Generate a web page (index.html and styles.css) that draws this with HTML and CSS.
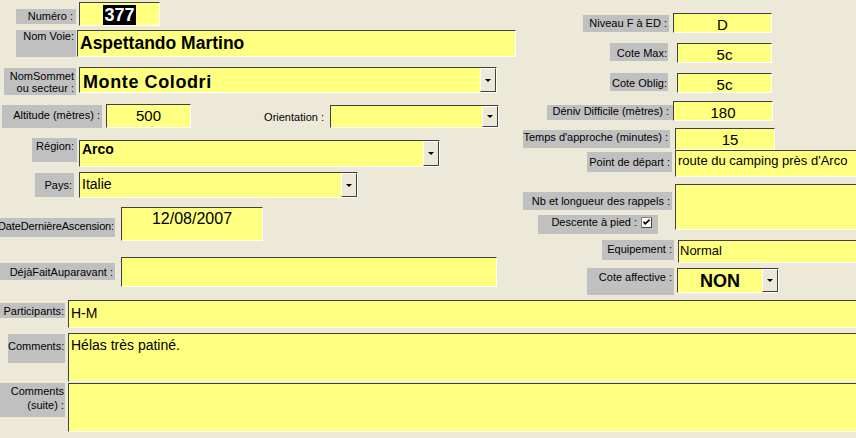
FILE: index.html
```html
<!DOCTYPE html>
<html lang="fr">
<head>
<meta charset="utf-8">
<title>Voie</title>
<link rel="stylesheet" href="styles.css">
</head>
<body>
<div class="form">
  <div class="top">
    <div class="col-left">
      <div class="row ra">
        <div class="lbl l-num">Numéro :</div>
        <div class="fld f-num"><div class="val v-num"><span class="sel">377</span></div></div>
      </div>
      <div class="row rb">
        <div class="lbl l-voie">Nom Voie:</div>
        <div class="fld f-voie"><div class="val v-voie">Aspettando Martino</div></div>
      </div>
      <div class="row rc">
        <div class="lbl l-sommet">NomSommet<br>ou secteur :</div>
        <div class="fld combo f-sommet"><div class="val v-sommet">Monte Colodri</div><div class="btn"><i class="tri"></i></div></div>
      </div>
      <div class="row rd">
        <div class="lbl l-alt">Altitude (mètres) :</div>
        <div class="fld f-alt"><div class="val v-alt">500</div></div>
        <div class="plain l-orient">Orientation :</div>
        <div class="fld combo f-orient"><div class="val"></div><div class="btn"><i class="tri"></i></div></div>
      </div>
      <div class="row re">
        <div class="lbl l-region">Région:</div>
        <div class="fld combo f-region"><div class="val v-region">Arco</div><div class="btn"><i class="tri"></i></div></div>
      </div>
      <div class="row rf">
        <div class="lbl l-pays">Pays:</div>
        <div class="fld combo f-pays"><div class="val v-pays">Italie</div><div class="btn"><i class="tri"></i></div></div>
      </div>
      <div class="row rg">
        <div class="lbl clip l-date"><span>DateDernièreAscension:</span></div>
        <div class="fld f-date"><div class="val v-date">12/08/2007</div></div>
      </div>
      <div class="row rh">
        <div class="lbl clip l-deja"><span>DéjàFaitAuparavant :</span></div>
        <div class="fld f-deja"><div class="val"></div></div>
      </div>
    </div>
    <div class="col-right">
      <div class="row r1">
        <div class="lbl l-niveau">Niveau F à ED :</div>
        <div class="fld f-niveau"><div class="val v-center v-niveau">D</div></div>
      </div>
      <div class="row r2">
        <div class="lbl l-cote">Cote Max:</div>
        <div class="fld f-cote"><div class="val v-center v-cote">5c</div></div>
      </div>
      <div class="row r3">
        <div class="lbl l-cote">Cote Oblig:</div>
        <div class="fld f-cote"><div class="val v-center v-cote">5c</div></div>
      </div>
      <div class="row r4">
        <div class="lbl l-deniv">Déniv Difficile (mètres) :</div>
        <div class="fld f-deniv"><div class="val v-center v-deniv">180</div></div>
      </div>
      <div class="row r5">
        <div class="lbl l-temps">Temps d'approche (minutes) :</div>
        <div class="fld f-temps"><div class="val v-center v-temps">15</div></div>
      </div>
      <div class="row r6">
        <div class="lbl l-point">Point de départ :</div>
        <div class="fld f-point"><div class="val v-point">route du camping près d'Arco</div></div>
      </div>
      <div class="row r7">
        <div class="stack">
          <div class="lbl l-rappels">Nb et longueur des rappels :</div>
          <div class="lbl l-descente"><span>Descente à pied :</span>
            <svg class="chk" width="11" height="11" viewBox="0 0 11 11"><rect x="0" y="0" width="11" height="11" fill="#808080"/><rect x="1" y="1" width="10" height="10" fill="#404040"/><rect x="1" y="1" width="9" height="9" fill="#fff"/><path d="M2.5 4.8 L4.3 6.8 L8.6 2.6" stroke="#000" stroke-width="1.7" fill="none"/></svg>
          </div>
        </div>
        <div class="fld f-rappels"><div class="val"></div></div>
      </div>
      <div class="row r8">
        <div class="lbl l-equip">Equipement :</div>
        <div class="fld f-equip"><div class="val v-equip">Normal</div></div>
      </div>
      <div class="row r9">
        <div class="lbl l-affect">Cote affective :</div>
        <div class="fld combo f-affect"><div class="val v-center v-affect">NON</div><div class="btn"><i class="tri"></i></div></div>
      </div>
    </div>
  </div>
  <div class="bottom">
    <div class="row p1">
      <div class="lbl l-part">Participants:</div>
      <div class="fld f-part"><div class="val v-part">H-M</div></div>
    </div>
    <div class="row p2">
      <div class="lbl l-comm">Comments:</div>
      <div class="fld f-comm"><div class="val v-comm">Hélas très patiné.</div></div>
    </div>
    <div class="row p3">
      <div class="lbl l-suite">Comments<br>(suite) :</div>
      <div class="fld f-suite"><div class="val"></div></div>
    </div>
  </div>
</div>
</body>
</html>
```

FILE: styles.css
```css
* { box-sizing: border-box; }
html, body { margin: 0; padding: 0; }
body {
  background: #ECE9D8;
  width: 856px;
  height: 438px;
  overflow: hidden;
  font-family: "Liberation Sans", Arial, sans-serif;
  color: #000;
}
.form { display: flex; flex-direction: column; }
.top { display: flex; height: 300px; flex: none; }
.col-left { width: 520px; flex: none; display: flex; flex-direction: column; }
.col-right { width: 336px; flex: none; display: flex; flex-direction: column; }
.bottom { display: flex; flex-direction: column; }
.row { display: flex; align-items: flex-start; flex: none; }

/* labels */
.lbl {
  flex: none;
  background: #C0C0C0;
  font-size: 11px;
  line-height: 13px;
  text-align: right;
  padding-right: 2px;
  white-space: nowrap;
  overflow: hidden;
}
.lbl.clip { display: flex; justify-content: flex-end; }
.plain {
  flex: none;
  font-size: 11px;
  line-height: 13px;
  text-align: right;
  white-space: nowrap;
}

/* fields */
.fld {
  flex: none;
  display: flex;
  background: #FFFF80;
  border: 1px solid;
  border-color: #404040 #FFFFFF #FFFFFF #404040;
  overflow: hidden;
}
.val {
  flex: 1;
  min-width: 0;
  white-space: nowrap;
  overflow: hidden;
  padding-left: 2px;
}
.v-center { text-align: center; padding-left: 0; }
.btn {
  flex: none;
  width: 16px;
  align-self: stretch;
  background: #ECE9D8;
  border: 1px solid;
  border-color: #FFFFFF #404040 #404040 #FFFFFF;
  display: flex;
  align-items: center;
  justify-content: center;
}
.tri {
  display: block;
  width: 0;
  height: 0;
  border-left: 3px solid transparent;
  border-right: 3px solid transparent;
  border-top: 3px solid #000;
}

/* left column */
.ra { margin-top: 2px; }
.l-num { margin: 7px 0 0 16px; width: 60px; height: 15px; padding-top: 1px; padding-right: 3px; }
.f-num { margin-left: 3px; width: 81px; height: 24px; }
.v-num { text-align: center; padding: 2px 0 0 0; font-size: 18px; line-height: 20px; font-weight: bold; }
.sel { background: #000; color: #fff; display: inline-block; padding: 0 1px; }

.rb { margin-top: 4px; }
.l-voie { margin-left: 16px; width: 60px; height: 27px; padding-top: 0; }
.f-voie { margin-left: 1px; width: 439px; height: 27px; }
.v-voie { font-size: 17.5px; line-height: 20px; font-weight: bold; padding-top: 2px; }

.rc { margin-top: 10px; }
.l-sommet { margin: 1px 0 0 4px; width: 72px; height: 27px; line-height: 12px; padding-top: 2px; }
.f-sommet { margin-left: 3px; width: 418px; height: 26px; }
.v-sommet { font-size: 18px; line-height: 20px; font-weight: bold; letter-spacing: 0.6px; padding: 4px 0 0 3px; }

.rd { margin-top: 9px; }
.l-alt { margin: 1px 0 0 2px; width: 100px; height: 23px; padding-top: 4px; }
.f-alt { margin-left: 4px; width: 85px; height: 24px; }
.v-alt { text-align: center; font-size: 15px; line-height: 17px; padding: 2px 0 0 0; }
.l-orient { margin-top: 7px; width: 133px; }
.f-orient { margin: 1px 0 0 6px; width: 169px; height: 23px; }

.re { margin-top: 10px; }
.l-region { margin-left: 32px; width: 45px; height: 24px; padding-top: 2px; padding-right: 3px; }
.f-region { margin: 2px 0 0 2px; width: 361px; height: 27px; }
.v-region { font-size: 14px; line-height: 16px; font-weight: bold; padding-left: 2px; }

.rf { margin-top: 5px; }
.l-pays { margin: 1px 0 0 35px; width: 39px; height: 24px; padding-top: 6px; }
.f-pays { margin-left: 5px; width: 279px; height: 26px; }
.v-pays { font-size: 14px; line-height: 16px; padding: 3px 0 0 2px; }

.rg { margin-top: 9px; }
.l-date { margin-top: 11px; width: 115px; height: 19px; padding-top: 2px; padding-right: 1px; letter-spacing: -0.15px; }
.f-date { margin-left: 6px; width: 142px; height: 34px; }
.v-date { text-align: center; font-size: 16px; line-height: 18px; padding: 2px 0 0 0; }

.rh { margin-top: 16px; }
.l-deja { margin-top: 6px; width: 115px; height: 17px; padding-top: 3px; }
.f-deja { margin-left: 6px; width: 376px; height: 30px; }

/* right column */
.r1 { margin-top: 13px; }
.l-niveau { margin: 2px 0 0 63px; width: 86px; height: 17px; padding-top: 2px; }
.f-niveau { margin-left: 4px; width: 99px; height: 20px; }
.v-niveau { font-size: 15px; line-height: 17px; padding-top: 2px; }

.r2, .r3 { margin-top: 10px; }
.l-cote { margin-left: 90px; width: 58px; height: 18px; padding-top: 4px; padding-right: 1px; }
.f-cote { margin-left: 9px; width: 95px; height: 20px; }
.v-cote { font-size: 15px; line-height: 17px; padding-top: 2px; }

.r4 { margin-top: 8px; }
.l-deniv { margin: 4px 0 0 27px; width: 126px; height: 15px; padding-top: 0; padding-right: 4px; }
.f-deniv { width: 100px; height: 20px; }
.v-deniv { font-size: 15px; line-height: 17px; padding-top: 2px; }

.r5 { margin-top: 6px; }
.l-temps { margin: 3px 0 0 3px; width: 147px; height: 18px; padding-top: 1px; }
.f-temps { margin: 1px 0 0 5px; width: 100px; height: 22px; }
.v-temps { font-size: 15px; line-height: 17px; padding: 2px 0 0 10px; }

.r6 { margin-top: 0; }
.l-point { margin: 2px 0 0 67px; width: 85px; height: 20px; padding-top: 4px; }
.f-point { margin-left: 3px; width: 200px; height: 27px; }
.v-point { font-size: 13px; line-height: 15px; padding: 2px 0 0 2px; }

.r7 { margin-top: 7px; }
.stack { flex: none; width: 152px; display: flex; flex-direction: column; }
.l-rappels { margin: 8px 0 0 3px; width: 149px; height: 18px; padding-top: 3px; }
.l-descente {
  margin: 5px 0 0 18px;
  width: 120px;
  height: 19px;
  padding: 1px 6px 0 0;
  display: flex;
  justify-content: flex-end;
  align-items: flex-start;
  gap: 4px;
}
.chk { flex: none; margin-top: 1px; }
.f-rappels { margin-left: 3px; width: 200px; height: 46px; }

.r8 { margin-top: 6px; }
.l-equip { margin-left: 82px; width: 72px; height: 20px; padding-top: 3px; }
.f-equip { margin-left: 4px; width: 200px; height: 23px; }
.v-equip { font-size: 13px; line-height: 15px; padding: 2px 0 0 1px; }

.r9 { margin-top: 5px; }
.l-affect { margin-left: 67px; width: 87px; height: 27px; padding-top: 3px; }
.f-affect { margin-left: 3px; width: 102px; height: 25px; }
.v-affect { font-size: 18px; line-height: 20px; font-weight: bold; padding-top: 2px; }

/* bottom */
.p1 { margin-top: 0; }
.l-part { margin-top: 3px; width: 65px; height: 15px; padding-top: 2px; padding-right: 1px; }
.f-part { margin-left: 3px; width: 800px; height: 28px; }
.v-part { font-size: 14px; line-height: 16px; padding: 4px 0 0 2px; }

.p2 { margin-top: 5px; }
.l-comm { margin: 1px 0 0 8px; width: 57px; height: 29px; padding-top: 6px; padding-right: 1px; }
.f-comm { margin-left: 3px; width: 800px; height: 49px; }
.v-comm { font-size: 14px; line-height: 16px; padding: 3px 0 0 2px; }

.p3 { margin-top: 1px; }
.l-suite { width: 65px; height: 34px; padding-top: 1px; line-height: 14px; padding-right: 1px; }
.f-suite { margin-left: 3px; width: 800px; height: 49px; }
```
